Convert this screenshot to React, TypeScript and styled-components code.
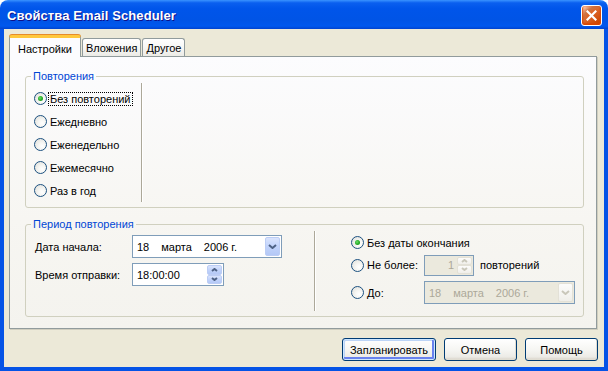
import React from 'react';
import styled, { createGlobalStyle, css } from 'styled-components';

const GlobalStyle = createGlobalStyle`
  html, body {
    margin: 0;
    padding: 0;
    background: #fff;
  }
  body {
    font-family: "Liberation Sans", Tahoma, Arial, sans-serif;
    font-size: 11px;
    color: #000;
  }
`;

const Window = styled.div`
  width: 608px;
  height: 371px;
  display: flex;
  flex-direction: column;
`;

const TitleBar = styled.div`
  height: 29px;
  flex: none;
  box-sizing: border-box;
  display: flex;
  align-items: center;
  justify-content: space-between;
  padding: 1px 6px 0 7px;
  border-radius: 8px 8px 0 0;
  background: linear-gradient(180deg, #3a93ff 0%, #0a5fef 10%, #0055ea 30%, #0054e6 70%, #0058ee 90%, #0043cf 100%);
`;

const Title = styled.span`
  color: #fff;
  font-weight: bold;
  font-size: 13px;
  letter-spacing: 0.1px;
  text-shadow: 1px 1px #0f1089;
`;

const CloseButton = styled.div`
  width: 21px;
  height: 21px;
  box-sizing: border-box;
  border: 1px solid #fff;
  border-radius: 3px;
  display: flex;
  align-items: center;
  justify-content: center;
  background: radial-gradient(circle at 90% 90%, #cc4600 0%, #dc6527 55%, #cd7546 70%, #ffccb2 90%, #fff 100%);
  box-shadow: inset 0 -1px 2px 1px #da4600;
`;

const Body = styled.div`
  flex: 1;
  display: flex;
  flex-direction: column;
  background: #ece9d8;
  border: solid #0553e6;
  border-width: 0 4px 4px 4px;
  padding: 6px 7px 0 5px;
`;

const TabStrip = styled.div`
  display: flex;
  align-items: flex-end;
  height: 21px;
  flex: none;
  position: relative;
  z-index: 1;
`;

const Tab = styled.div<{ $active?: boolean }>`
  box-sizing: border-box;
  display: flex;
  align-items: center;
  border: 1px solid #919b9c;
  border-radius: 3px 3px 0 0;
  white-space: nowrap;
  ${p =>
    p.$active
      ? css`
          height: 22px;
          margin-bottom: -1px;
          padding: 2px 8px 0 8px;
          border-top: 3px solid #ffc83c;
          border-bottom: none;
          box-shadow: 0 -1px 0 #e68b2c;
          background: #fcfcfe;
        `
      : css`
          height: 18px;
          padding: 1px 3px 0 3px;
          margin-left: 1px;
          border-bottom: none;
          background: linear-gradient(180deg, #fff 0%, #f7f7f5 50%, #ecebe6 100%);
        `}
`;

const Panel = styled.div`
  height: 273px;
  flex: none;
  box-sizing: border-box;
  border: 1px solid #919b9c;
  background: linear-gradient(180deg, #fcfcfe 0%, #f7f6f2 60%, #f4f3ee 100%);
  box-shadow: 1px 1px 0 #d0cebf;
  padding: 13px 12px 0 15px;
`;

const Group = styled.fieldset<{ $gap?: number }>`
  margin: ${p => p.$gap ?? 0}px 0 0 0;
  min-inline-size: 0;
  border: 1px solid #d0d0bf;
  border-radius: 3px;
  padding: 0 8px 5px 8px;
`;

const Legend = styled.legend`
  color: #0046d5;
  line-height: 13px;
  padding: 0 2px;
  margin-left: -3px;
`;

const RadioList = styled.div`
  width: 107px;
  padding-top: 4px;
  border-right: 1px solid #aca899;
  box-shadow: 1px 0 0 #fff;
`;

const Option = styled.div<{ $height?: number }>`
  height: ${p => p.$height ?? 23}px;
  display: flex;
  align-items: center;
`;

const Radio = styled.span<{ $checked?: boolean }>`
  width: 13px;
  height: 13px;
  box-sizing: border-box;
  flex: none;
  position: relative;
  border-radius: 50%;
  border: 1px solid #1c5180;
  background: radial-gradient(circle at 65% 65%, #fff 0%, #f6f6f3 35%, #dcdcd7 100%);
  ${p =>
    p.$checked &&
    css`
      &::after {
        content: '';
        position: absolute;
        left: 3px;
        top: 3px;
        width: 5px;
        height: 5px;
        border-radius: 50%;
        background: radial-gradient(circle at 40% 40%, #6ae06a 0%, #24a824 55%, #1a8a1a 100%);
      }
    `}
`;

const OptionLabel = styled.span<{ $focused?: boolean }>`
  margin-left: 1px;
  padding: 0 1px;
  line-height: 12px;
  border: 1px dotted ${p => (p.$focused ? '#000' : 'transparent')};
  white-space: nowrap;
`;

const PeriodRow = styled.div`
  display: flex;
  height: 80px;
`;

const LeftColumn = styled.div`
  width: 280px;
  padding: 4px 0 0 1px;
  border-right: 1px solid #aca899;
  box-shadow: 1px 0 0 #fff;
  display: flex;
  flex-direction: column;
  gap: 5px;
`;

const RightColumn = styled.div`
  padding-left: 36px;
  display: flex;
  flex-direction: column;
`;

const FieldRow = styled.div<{ $offset?: number }>`
  display: flex;
  align-items: center;
  margin-top: ${p => p.$offset ?? 0}px;
`;

const FieldLabel = styled.span<{ $width: number }>`
  width: ${p => p.$width}px;
  flex: none;
`;

const RadioCell = styled.div`
  width: 73px;
  display: flex;
  align-items: center;
  flex: none;
`;

const Field = styled.div<{ $width: number; $height?: number; $disabled?: boolean }>`
  width: ${p => p.$width}px;
  height: ${p => p.$height ?? 23}px;
  box-sizing: border-box;
  border: 1px solid #7f9db9;
  background: ${p => (p.$disabled ? '#ebe9dd' : '#fff')};
  color: ${p => (p.$disabled ? '#aca899' : '#000')};
  display: flex;
  align-items: center;
  padding: 0 1px 0 4px;
`;

const DateParts = styled.div`
  display: flex;
  gap: 12px;
  flex: 1;
`;

const FieldValue = styled.span<{ $right?: boolean }>`
  flex: 1;
  text-align: ${p => (p.$right ? 'right' : 'left')};
  padding-right: ${p => (p.$right ? '3px' : '0')};
`;

const DropButton = styled.div<{ $disabled?: boolean }>`
  width: 15px;
  height: 19px;
  box-sizing: border-box;
  border-radius: 2px;
  display: flex;
  align-items: center;
  justify-content: center;
  ${p =>
    p.$disabled
      ? css`
          border: 1px solid #e3e1d7;
          background: linear-gradient(180deg, #fcfcfb 0%, #f0efea 100%);
        `
      : css`
          border: 1px solid #bccdf5;
          background: linear-gradient(180deg, #dae4fd 0%, #c1d3fb 50%, #b4c8f6 100%);
        `}
`;

const SpinStack = styled.div<{ $height: number }>`
  width: 15px;
  height: ${p => p.$height}px;
  display: flex;
  flex-direction: column;
`;

const SpinButton = styled(DropButton)`
  flex: 1;
  height: auto;
`;

const ExtraText = styled.span`
  margin-left: 6px;
`;

const ButtonRow = styled.div`
  display: flex;
  justify-content: flex-end;
  gap: 8px;
  margin: 9px -1px 0 0;
`;

const Button = styled.button<{ $width: number; $default?: boolean }>`
  width: ${p => p.$width}px;
  height: 23px;
  box-sizing: border-box;
  font: inherit;
  color: #000;
  padding: 0;
  border: 1px solid #003c74;
  border-radius: 3px;
  background: linear-gradient(180deg, #fff 0%, #f6f6f3 50%, #ecebe6 85%, #d6d0c5 100%);
  box-shadow: ${p =>
    p.$default
      ? 'inset 0 0 0 1px #cee7ff, inset -1px -1px 0 2px #6982ee, inset 1px 1px 0 1px #bcd4f6'
      : 'inset -1px -1px 0 #e0ddd2'};
`;

function Chevron({ up, disabled, small }: { up?: boolean; disabled?: boolean; small?: boolean }) {
  const color = disabled ? '#c9c7ba' : '#4d6185';
  const w = small ? 7 : 9;
  const h = small ? 4 : 5;
  return (
    <svg width={w} height={h} viewBox={`0 0 ${w} ${h}`}>
      <polyline
        points={up ? `1,${h - 1} ${w / 2},1 ${w - 1},${h - 1}` : `1,1 ${w / 2},${h - 1} ${w - 1},1`}
        fill="none"
        stroke={color}
        strokeWidth={2}
      />
    </svg>
  );
}

function DateValue() {
  return (
    <DateParts>
      <span>18</span>
      <span>марта</span>
      <span>2006 г.</span>
    </DateParts>
  );
}

const repeats = ['Без повторений', 'Ежедневно', 'Еженедельно', 'Ежемесячно', 'Раз в год'];

export default function App() {
  return (
    <>
      <GlobalStyle />
      <Window>
        <TitleBar>
          <Title>Свойства Email Scheduler</Title>
          <CloseButton>
            <svg width="11" height="11" viewBox="0 0 11 11">
              <path d="M1.5 1.5 L9.5 9.5 M9.5 1.5 L1.5 9.5" stroke="#fff" strokeWidth="2.2" strokeLinecap="square" />
            </svg>
          </CloseButton>
        </TitleBar>
        <Body>
          <TabStrip>
            <Tab $active>Настройки</Tab>
            <Tab>Вложения</Tab>
            <Tab>Другое</Tab>
          </TabStrip>
          <Panel>
            <Group>
              <Legend>Повторения</Legend>
              <RadioList>
                {repeats.map((r, i) => (
                  <Option key={r}>
                    <Radio $checked={i === 0} />
                    <OptionLabel $focused={i === 0}>{r}</OptionLabel>
                  </Option>
                ))}
              </RadioList>
            </Group>
            <Group $gap={10}>
              <Legend>Период повторения</Legend>
              <PeriodRow>
                <LeftColumn>
                  <FieldRow>
                    <FieldLabel $width={97}>Дата начала:</FieldLabel>
                    <Field $width={150}>
                      <DateValue />
                      <DropButton>
                        <Chevron />
                      </DropButton>
                    </Field>
                  </FieldRow>
                  <FieldRow>
                    <FieldLabel $width={97}>Время отправки:</FieldLabel>
                    <Field $width={92}>
                      <FieldValue>18:00:00</FieldValue>
                      <SpinStack $height={19}>
                        <SpinButton>
                          <Chevron up small />
                        </SpinButton>
                        <SpinButton>
                          <Chevron small />
                        </SpinButton>
                      </SpinStack>
                    </Field>
                  </FieldRow>
                </LeftColumn>
                <RightColumn>
                  <Option>
                    <Radio $checked />
                    <OptionLabel>Без даты окончания</OptionLabel>
                  </Option>
                  <Option $height={22}>
                    <RadioCell>
                      <Radio />
                      <OptionLabel>Не более:</OptionLabel>
                    </RadioCell>
                    <Field $width={50} $height={21} $disabled>
                      <FieldValue $right>1</FieldValue>
                      <SpinStack $height={17}>
                        <SpinButton $disabled>
                          <Chevron up small disabled />
                        </SpinButton>
                        <SpinButton $disabled>
                          <Chevron small disabled />
                        </SpinButton>
                      </SpinStack>
                    </Field>
                    <ExtraText>повторений</ExtraText>
                  </Option>
                  <FieldRow $offset={5}>
                    <RadioCell>
                      <Radio />
                      <OptionLabel>До:</OptionLabel>
                    </RadioCell>
                    <Field $width={151} $disabled>
                      <DateValue />
                      <DropButton $disabled>
                        <Chevron disabled />
                      </DropButton>
                    </Field>
                  </FieldRow>
                </RightColumn>
              </PeriodRow>
            </Group>
          </Panel>
          <ButtonRow>
            <Button $width={94} $default>
              Запланировать
            </Button>
            <Button $width={73}>Отмена</Button>
            <Button $width={73}>Помощь</Button>
          </ButtonRow>
        </Body>
      </Window>
    </>
  );
}
